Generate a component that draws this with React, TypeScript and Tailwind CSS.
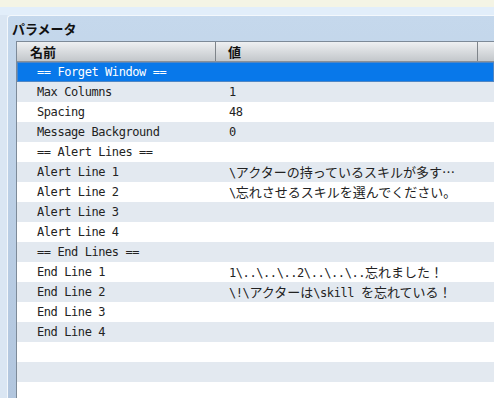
import React from 'react'

type Row = { name: string; value?: string; selected?: boolean }

const rows: Row[] = [
  { name: '== Forget Window ==', selected: true },
  { name: 'Max Columns', value: '1' },
  { name: 'Spacing', value: '48' },
  { name: 'Message Background', value: '0' },
  { name: '== Alert Lines ==' },
  { name: 'Alert Line 1', value: '\\アクターの持っているスキルが多す…' },
  { name: 'Alert Line 2', value: '\\忘れさせるスキルを選んでください。' },
  { name: 'Alert Line 3' },
  { name: 'Alert Line 4' },
  { name: '== End Lines ==' },
  { name: 'End Line 1', value: '1\\..\\..\\..2\\..\\..\\..忘れました！' },
  { name: 'End Line 2', value: '\\!\\アクターは\\skill を忘れている！' },
  { name: 'End Line 3' },
  { name: 'End Line 4' },
  { name: '' },
  { name: '' },
  { name: '' },
]

// ascii in mono, japanese a bit larger
const Mixed = ({ text }: { text: string }) => {
  const parts = text.match(/[\x00-\x7f]+|[^\x00-\x7f]+/g) ?? []
  return (
    <>
      {parts.map((p, i) =>
        /^[\x00-\x7f]/.test(p) ? (
          <span key={i} className="whitespace-pre">{p}</span>
        ) : (
          <span key={i} className="text-[13px] tracking-normal font-['Noto_Sans_CJK_JP',sans-serif]">{p}</span>
        )
      )}
    </>
  )
}

export default function App() {
  return (
    <div className="w-[494px] h-[398px] overflow-hidden flex flex-col bg-[#dde9f5] font-['DejaVu_Sans_Mono','Noto_Sans_CJK_JP',monospace]">
      <div className="h-[7px] shrink-0 bg-[#f4f4e5]" />
      <div className="h-[8px] shrink-0 bg-[#e2eefa]" />
      <div className="flex-1 flex min-h-0">
        <div className="w-[7px] bg-[#dae6f3]" />
        <div className="flex-1 flex flex-col min-h-0 rounded-tl-[4px] border-t border-l border-[#f4f8fc] bg-gradient-to-b from-[#c5d8ec] to-[#b2c6de]">
          {/* title */}
          <div className="h-[25px] shrink-0 pl-[4px] flex items-center text-[13px] font-bold text-[#111] font-['Noto_Sans_CJK_JP',sans-serif]">
            パラメータ
          </div>
          {/* table */}
          <div className="flex-1 min-h-0 overflow-hidden ml-[8px] flex flex-col bg-white border-l border-t border-[#7d8a98] text-[12px] tracking-[-0.42px] text-[#222]">
            <div className="h-[20px] shrink-0 flex bg-gradient-to-b from-[#eef0f2] to-[#c3c7cb] border-b border-[#8a9098] text-[13px] tracking-normal font-bold font-['Noto_Sans_CJK_JP',sans-serif] text-[#111]">
              <div className="w-[199px] pl-[13px] flex items-center border-r border-[#7e848a]">名前</div>
              <div className="w-[262px] pl-[12px] flex items-center border-r border-[#7e848a]">値</div>
              <div className="flex-1" />
            </div>
            {rows.map((r, i) =>
              r.selected ? (
                <div key={i} className="h-[20px] shrink-0 flex items-center bg-[#0878ea] border border-[#4f86c4] text-white">
                  <div className="w-[198px] pl-[19px] whitespace-pre">{r.name}</div>
                </div>
              ) : (
                <div key={i} className={`h-[20px] shrink-0 flex items-center ${i % 2 === 1 ? 'bg-[#e3e9f0]' : 'bg-white'}`}>
                  <div className="w-[200px] pl-[20px] whitespace-pre">{r.name}</div>
                  <div className="flex-1 pl-[12px] whitespace-nowrap">{r.value ? <Mixed text={r.value} /> : null}</div>
                </div>
              )
            )}
          </div>
        </div>
      </div>
    </div>
  )
}
